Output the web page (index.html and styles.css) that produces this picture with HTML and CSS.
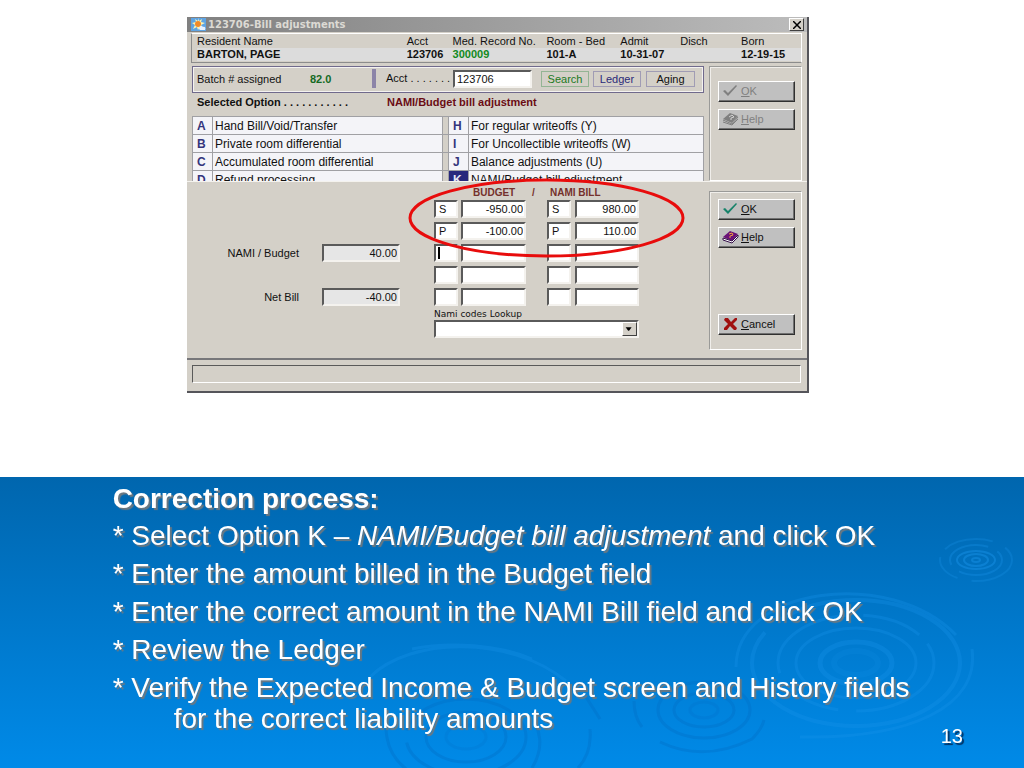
FILE: index.html
```html
<!DOCTYPE html>
<html lang="en">
<head>
    <meta charset="UTF-8">
    <meta name="viewport" content="width=device-width, initial-scale=1.0">
    <title>Bill adjustments</title>
    <link rel="stylesheet" href="styles.css">
</head>
<body>

<section class="stage">
    <div class="dialog">
        <div class="titlebar">
            <svg class="app-icon" width="15" height="13" viewBox="0 0 15 13">
                <rect width="15" height="13" fill="#5ea4e4"/>
                <path d="M7 0l1 3 3-2-1 3 4 1-4 2 2 3-3-1-2 3-1-3-4 2 2-4-3-2 4-1-1-3 3 2z" fill="#fff4b0"/>
                <circle cx="7" cy="6" r="3" fill="#f08a28"/>
                <path d="M8 11c0-3 3-4 4-2 2-1 3 1 2 3H9z" fill="#e8f2ff"/>
            </svg>
            <span class="caption">123706-Bill adjustments</span>
            <button class="close" aria-label="Close">
                <svg width="8" height="8" viewBox="0 0 8 8"><path d="M0 0l8 8M8 0L0 8" stroke="#000" stroke-width="1.5"/></svg>
            </button>
        </div>

        <table class="resident">
            <thead>
                <tr><th>Resident Name</th><th>Acct</th><th>Med. Record No.</th><th>Room - Bed</th><th>Admit</th><th>Disch</th><th>Born</th></tr>
            </thead>
            <tbody>
                <tr><td>BARTON, PAGE</td><td>123706</td><td class="green">300009</td><td>101-A</td><td>10-31-07</td><td></td><td>12-19-15</td></tr>
            </tbody>
        </table>

        <div class="pane upper">
            <div class="work">
                <div class="batch">
                    <span>Batch # assigned</span>
                    <b class="batch-no">82.0</b>
                    <label class="acct-label" for="acct">Acct . . . . . . .</label>
                    <input class="field acct" id="acct" type="text" value="123706">
                    <button class="flat search">Search</button>
                    <button class="flat ledger">Ledger</button>
                    <button class="flat">Aging</button>
                </div>
                <div class="selected">
                    <b>Selected Option . . . . . . . . . . .</b>
                    <b class="option-name">NAMI/Budget bill adjustment</b>
                </div>
                <table class="options">
                    <tr><th>A</th><td class="first">Hand Bill/Void/Transfer</td><td class="split"></td><th>H</th><td>For regular writeoffs (Y)</td></tr>
                    <tr><th>B</th><td>Private room differential</td><td class="split"></td><th>I</th><td>For Uncollectible writeoffs (W)</td></tr>
                    <tr><th>C</th><td>Accumulated room differential</td><td class="split"></td><th>J</th><td>Balance adjustments (U)</td></tr>
                    <tr><th>D</th><td>Refund processing</td><td class="split"></td><th class="picked">K</th><td>NAMI/Budget bill adjustment</td></tr>
                </table>
            </div>
            <div class="actions">
                <button class="push" disabled>
                    <svg width="17" height="14" viewBox="0 0 17 14"><path d="M1 7l2-1 3 3 8-8 1 1-9 10z" fill="#808080"/></svg>
                    <span><u>O</u>K</span>
                </button>
                <button class="push" disabled>
                    <svg width="17" height="14" viewBox="0 0 17 14"><path d="M1 7l7-6 8 3-6 7z" fill="#808080"/><path d="M1 8l9 4 6-7M1 10l9 3 6-6" fill="none" stroke="#808080"/><path d="M7 5l3-2 2 2-3 1v2" fill="none" stroke="#d0d0d0"/></svg>
                    <span><u>H</u>elp</span>
                </button>
            </div>
        </div>

        <div class="pane lower">
            <div class="amounts">
                <b class="head budget-head">BUDGET</b>
                <b class="head slash">/</b>
                <b class="head nami-head">NAMI BILL</b>

                <input class="field c1 row1" aria-label="Budget code 1" value="S">
                <input class="field num c2 row1" aria-label="Budget amount 1" value="-950.00">
                <input class="field c3 row1" aria-label="NAMI code 1" value="S">
                <input class="field num c4 row1" aria-label="NAMI amount 1" value="980.00">

                <input class="field c1 row2" aria-label="Budget code 2" value="P">
                <input class="field num c2 row2" aria-label="Budget amount 2" value="-100.00">
                <input class="field c3 row2" aria-label="NAMI code 2" value="P">
                <input class="field num c4 row2" aria-label="NAMI amount 2" value="110.00">

                <label class="total-label row3" for="nami-total">NAMI / Budget</label>
                <input class="field num total row3" id="nami-total" value="40.00" readonly>
                <input class="field caret c1 row3" aria-label="Budget code 3">
                <input class="field num c2 row3" aria-label="Budget amount 3">
                <input class="field c3 row3" aria-label="NAMI code 3">
                <input class="field num c4 row3" aria-label="NAMI amount 3">

                <input class="field c1 row4" aria-label="Budget code 4">
                <input class="field num c2 row4" aria-label="Budget amount 4">
                <input class="field c3 row4" aria-label="NAMI code 4">
                <input class="field num c4 row4" aria-label="NAMI amount 4">

                <label class="total-label row5" for="net-total">Net Bill</label>
                <input class="field num total row5" id="net-total" value="-40.00" readonly>
                <input class="field c1 row5" aria-label="Budget code 5">
                <input class="field num c2 row5" aria-label="Budget amount 5">
                <input class="field c3 row5" aria-label="NAMI code 5">
                <input class="field num c4 row5" aria-label="NAMI amount 5">

                <div class="lookup">
                    <label for="codes">Nami codes Lookup</label>
                    <div class="combo">
                        <select class="field" id="codes"><option></option></select>
                        <svg class="drop" width="15" height="14" viewBox="0 0 15 14"><path d="M3 5h7l-3 4h-1z" fill="#000"/></svg>
                    </div>
                </div>
            </div>
            <div class="actions">
                <button class="push">
                    <svg width="17" height="14" viewBox="0 0 17 14"><path d="M1 7l2-1 3 3 8-8 1 1-9 10z" fill="#16826a"/></svg>
                    <span><u>O</u>K</span>
                </button>
                <button class="push">
                    <svg width="17" height="14" viewBox="0 0 17 14"><path d="M1 7l7-6 8 3-6 7z" fill="#6a1278"/><path d="M1 8l9 3 6-6v2l-6 6-9-3z" fill="#fff" stroke="#35104a"/><path d="M7 4l3-1 1 2-3 1v2" fill="none" stroke="#f0a040"/></svg>
                    <span><u>H</u>elp</span>
                </button>
                <button class="push cancel">
                    <svg width="17" height="14" viewBox="0 0 17 14"><path d="M3 1h3l3 4 4-4h2v2l-4 4 4 4-1 2h-2l-4-4-3 4H2v-2l4-4-4-4z" fill="#a01010"/></svg>
                    <span><u>C</u>ancel</span>
                </button>
            </div>
            <svg class="ring" viewBox="0 0 278 80" preserveAspectRatio="none">
                <ellipse cx="139" cy="40" rx="137" ry="38" fill="none" stroke="#e80c0c" stroke-width="3"/>
            </svg>
        </div>

        <div class="status"><div class="status-text"></div></div>
    </div>
</section>

<section class="notes">
    <svg class="ripples" viewBox="0 0 1024 291" preserveAspectRatio="xMaxYMax slice">
        <g fill="none" stroke="#1a94ea">
            <g stroke-width="2" opacity=".45">
                <ellipse cx="976" cy="83" rx="36" ry="21" stroke-dasharray="50 14 30 9" opacity=".6"/>
                <ellipse cx="976" cy="83" rx="26" ry="15" stroke-dasharray="50 10" opacity=".7"/>
                <ellipse cx="976" cy="83" rx="19" ry="9"/>
                <ellipse cx="976" cy="83" rx="12" ry="6"/>
                <ellipse cx="976" cy="83" rx="4" ry="2"/>
            </g>
            <g stroke-width="3" opacity=".3">
                <path d="M736 190C736 110 890 90 956 158M972 172C980 230 910 262 800 260"/>
                <ellipse cx="856" cy="186" rx="104" ry="63" stroke-width="4" stroke-dasharray="300 20"/>
                <ellipse cx="856" cy="186" rx="78" ry="48" stroke-dasharray="100 18 60 12"/>
                <ellipse cx="856" cy="186" rx="60" ry="35"/>
                <ellipse cx="856" cy="186" rx="36" ry="21" stroke-width="5"/>
                <ellipse cx="856" cy="186" rx="22" ry="12" stroke-width="6" opacity=".5"/>
                <path d="M370 200C410 160 510 158 566 204M412 172C450 164 500 168 532 182"/>
            </g>
        </g>
        <g fill="none" stroke="#0070c8" stroke-width="3" opacity=".4">
            <ellipse cx="466" cy="260" rx="60" ry="38" stroke-dasharray="150 12"/>
            <ellipse cx="466" cy="260" rx="40" ry="25"/>
            <ellipse cx="466" cy="260" rx="20" ry="12" opacity=".5"/>
            <path d="M386 250Q386 276 406 292M535 246Q546 268 532 291M586 220L600 242M590 252Q592 276 578 291"/>
            <ellipse cx="704" cy="233" rx="46" ry="28"/>
            <ellipse cx="704" cy="233" rx="30" ry="17"/>
            <ellipse cx="704" cy="233" rx="14" ry="8" opacity=".6"/>
            <path d="M634 224Q634 240 642 250M660 265Q704 286 752 262Q762 252 764 243"/>
        </g>
    </svg>
    <div class="steps">
        <h1>Correction process:</h1>
        <p>* Select Option K – <em>NAMI/Budget bill adjustment</em> and click OK</p>
        <p>* Enter the amount billed in the Budget field</p>
        <p>* Enter the correct amount in the NAMI Bill field and click OK</p>
        <p>* Review the Ledger</p>
        <p class="hang">* Verify the Expected Income &amp; Budget screen and History fields for the correct liability amounts</p>
    </div>
    <span class="page">13</span>
</section>

</body>
</html>
```

FILE: styles.css
```css
* {
    margin: 0;
    padding: 0;
    box-sizing: border-box;
}

body {
    min-height: 100vh;
    display: flex;
    flex-direction: column;
    background: #fff;
    color: #111;
    font-family: "Liberation Sans", Arial, sans-serif;
    font-size: 11px;
}

button, input, select {
    font: inherit;
    color: inherit;
    border-radius: 0;
    outline: none;
}

.stage {
    display: grid;
    grid-template-columns: 187fr 622fr 215fr;
    padding: 17px 0 84px;
}

/* dialog */
.dialog {
    grid-column: 2;
    min-width: 0;
    background: #d4d0c8;
    border-right: 2px solid #55555a;
    border-bottom: 2px solid #55555a;
    white-space: nowrap;
}

.titlebar {
    display: flex;
    align-items: center;
    height: 15px;
    padding: 0 3px 0 4px;
    gap: 2px;
    background: linear-gradient(90deg, #808080, #bcbcbc);
}

.caption {
    flex: 1;
    color: #dcdad4;
    font-family: "DejaVu Sans", sans-serif;
    font-size: 10px;
    font-weight: bold;
}

.close {
    display: flex;
    align-items: center;
    justify-content: center;
    width: 15px;
    height: 13px;
    background: #d4d0c8;
    border: 1px solid;
    border-color: #fff #404040 #404040 #fff;
}

.resident {
    display: block;
    margin: 1px 5px 3px 4px;
    padding: 1px 0 0 5px;
    height: 30px;
    border: 1px solid;
    border-color: #fff #fff #8c8c8c #8c8c8c;
}

.resident thead, .resident tbody {
    display: block;
}

.resident tr {
    display: grid;
    grid-template-columns: 210fr 46fr 94fr 74fr 60fr 61fr 60fr;
}

.resident th, .resident td {
    height: 13px;
    line-height: 13px;
    text-align: left;
    font-weight: normal;
}

.resident td {
    background: #dcdcdc;
    font-weight: bold;
}

.resident .green {
    color: #128a22;
}

.pane {
    display: flex;
    gap: 5px;
    padding: 0 5px;
}

.upper {
    height: 115px;
    overflow: hidden;
}

.work, .amounts {
    flex: 1;
    min-width: 0;
}

.batch {
    display: grid;
    grid-template-columns: 113fr 62fr 81fr 79fr 9fr 48fr 4fr 48fr 5fr 49fr;
    align-items: center;
    height: 27px;
    padding: 0 8px 2px 4px;
    border: 1px solid #706a8c;
    box-shadow: inset 1px 1px #f4f2f0, inset -1px -1px #f4f2f0;
}

.batch-no {
    color: #146a24;
}

.acct-label {
    padding-left: 10px;
    line-height: 19px;
    border-left: 4px solid #8c84a8;
}

.field {
    width: 100%;
    height: 18px;
    padding: 0 3px;
    background: #fff;
    border: 2px solid;
    border-color: #5a5a5a #f4f2ee #f4f2ee #5a5a5a;
    min-width: 0;
}

.field.acct {
    padding: 0 2px;
}

.flat {
    grid-column: 10;
    height: 16px;
    background: #d4d0c8;
    border: 1px solid #a09cb4;
}

.search {
    grid-column: 6;
    color: #227a22;
    border-color: #94b494;
}

.ledger {
    grid-column: 8;
    color: #2a2a78;
}

.selected {
    display: flex;
    align-items: center;
    height: 23px;
    padding: 0 5px 6px;
}

.selected b {
    flex: 190;
}

.selected .option-name {
    flex: 312;
    color: #6a0c14;
}

.options {
    width: 100%;
    table-layout: fixed;
    border-collapse: collapse;
    background: #f4f4f8;
    border: 1px solid #404040;
    font-size: 12px;
}

.options th, .options td {
    height: 18px;
    line-height: 16px;
    text-align: left;
    border: 1px solid #a0a0a4;
}

.options th {
    width: 20px;
    padding-left: 4px;
    color: #34347c;
}

.options td {
    padding-left: 2px;
}

.options .first {
    width: 45%;
}

.options .split {
    width: 6px;
    padding: 0;
    background: #d4d0c8;
}

.options .picked {
    background: #28287c;
    color: #e4e4f4;
}

/* buttons on the right hand side */
.actions {
    display: flex;
    flex-direction: column;
    gap: 7px;
    width: 93px;
    padding: 14px 6px 0 8px;
    border: 1px solid;
    border-color: #9a9a98 #fff #fff #9a9a98;
    box-shadow: inset 1px 1px #f0eeea;
}

.push {
    display: flex;
    align-items: center;
    gap: 2px;
    height: 21px;
    padding: 0 3px 2px;
    background: #c0c0c0;
    border: 1px solid;
    border-color: #fff #303030 #303030 #fff;
    box-shadow: inset -1px -1px #707070;
}

.push:disabled {
    color: #808080;
}

/* lower form */
.lower {
    position: relative;
    height: 177px;
    padding-top: 9px;
    border-top: 1px solid #f4f2ee;
}

.lower .actions {
    height: 159px;
    padding-top: 7px;
    padding-bottom: 14px;
}

.cancel {
    margin-top: auto;
}

.amounts {
    display: grid;
    grid-template-columns: 107fr 23fr 78fr 34fr 24fr 3fr 65fr 21fr 24fr 4fr 64fr 65fr;
    grid-template-rows: 7px repeat(5, 22px) 30px;
    align-items: center;
}

.head {
    grid-row: 1;
    color: #74302c;
    font-size: 10px;
    line-height: 10px;
    margin-top: -4px;
}

.budget-head {
    grid-column: 7;
    padding-left: 12px;
}

.slash {
    grid-column: 8;
    padding-left: 6px;
}

.nami-head {
    grid-column: 9 / 12;
    padding-left: 3px;
}

.c1 { grid-column: 5; }
.c2 { grid-column: 7; }
.c3 { grid-column: 9; }
.c4 { grid-column: 11; }

.row1 { grid-row: 2; }
.row2 { grid-row: 3; }
.row3 { grid-row: 4; }
.row4 { grid-row: 5; }
.row5 { grid-row: 6; }

.num {
    text-align: right;
    padding-right: 1px;
}

.total-label {
    grid-column: 1;
    text-align: right;
}

.total {
    grid-column: 3;
    background: #e6e6e6;
}

.caret {
    background: #fff linear-gradient(#000, #000) 2px 1px / 2px 12px no-repeat;
}

.lookup {
    grid-column: 5 / 12;
    grid-row: 7;
    font-family: "DejaVu Sans", sans-serif;
    font-size: 9px;
}

.lookup label {
    display: block;
    line-height: 12px;
}

.combo {
    position: relative;
}

.combo select {
    display: block;
    appearance: none;
}

.drop {
    position: absolute;
    top: 2px;
    right: 2px;
    background: #d4d0c8;
    border: 1px solid;
    border-color: #fff #404040 #404040 #fff;
    pointer-events: none;
}

/* hand drawn mark round the first two rows */
.ring {
    position: absolute;
    left: 221px;
    top: -4px;
    width: 277px;
    height: 80px;
    pointer-events: none;
}

.status {
    padding: 5px 6px 8px 5px;
    border-top: 2px solid #77777a;
}

.status-text {
    height: 18px;
    border: 1px solid;
    border-color: #5a5a5a #fff #fff #5a5a5a;
}

/* notes */
.notes {
    position: relative;
    flex: 1;
    display: flex;
    padding: 6px 61px 0 11%;
    color: #fff;
    background: linear-gradient(#0066ae, #008ae8);
    font-size: 28px;
    line-height: 31px;
    text-shadow: 2px 2px 1px #6c7880;
    overflow: hidden;
}

.ripples {
    position: absolute;
    width: 100%;
    height: 100%;
    left: 0;
    top: 0;
}

.steps {
    position: relative;
    flex: 1;
}

.steps h1 {
    font-size: 28px;
    line-height: 31px;
    margin-bottom: 6px;
}

.steps p {
    margin-bottom: 7px;
}

.steps .hang {
    padding-left: 61px;
    text-indent: -61px;
}

.page {
    position: relative;
    align-self: flex-end;
    padding-bottom: 16px;
    font-size: 20px;
    text-shadow: 2px 2px 1px #003060;
}
```
